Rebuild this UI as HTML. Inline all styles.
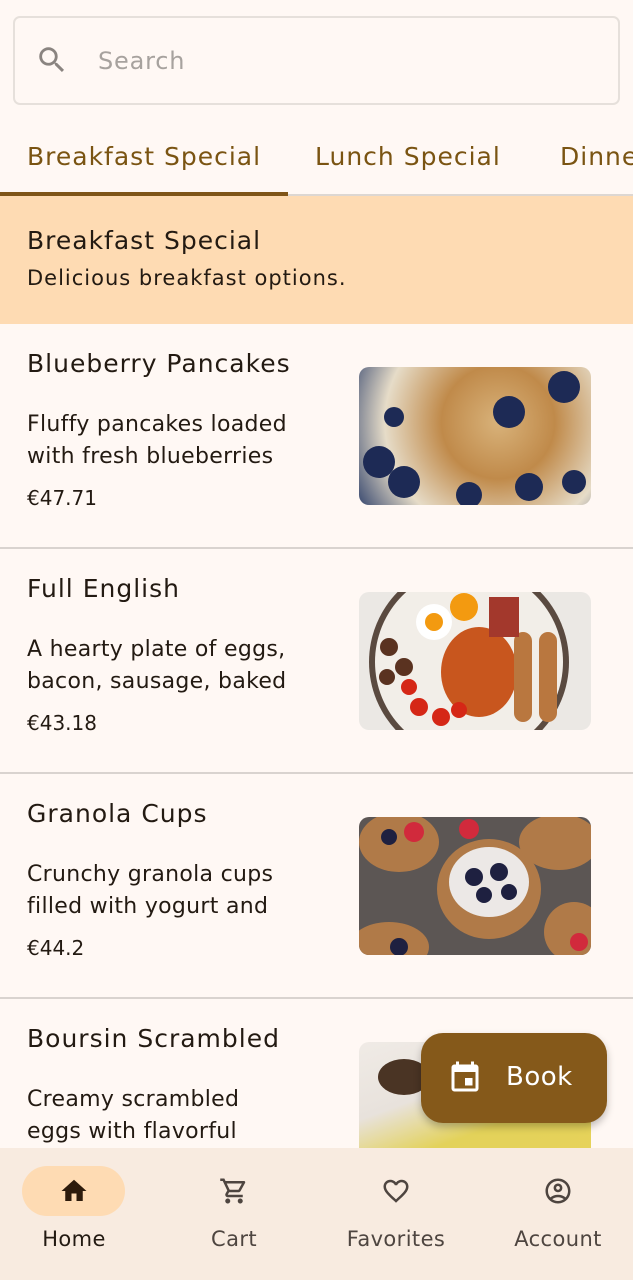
<!DOCTYPE html>
<html><head><meta charset="utf-8"><style>
*{margin:0;padding:0;box-sizing:border-box}
body{width:633px;height:1280px;overflow:hidden;background:#fff8f4;font-family:"DejaVu Sans","Liberation Sans",sans-serif;position:relative;color:#231a12}
.search{position:absolute;left:13px;top:16px;width:607px;height:89px;border:2px solid #e6e0db;border-radius:7px}
.search span{position:absolute;left:83px;top:29px;font-size:24px;letter-spacing:.8px;color:#a7a29e}
.search svg{position:absolute;left:20px;top:25px}
.tab{position:absolute;top:142px;font-size:25px;letter-spacing:1px;color:#7a5412}
.ind{position:absolute;left:0;top:192px;width:288px;height:4px;background:#7f5518}
.div0{position:absolute;left:0;top:194px;width:633px;height:2px;background:#ddd7d2}
.hdr{position:absolute;left:0;top:196px;width:633px;height:128px;background:#fedbb3}
.hdr h2{position:absolute;left:27px;top:30px;font-size:25px;letter-spacing:1px;font-weight:normal}
.hdr p{position:absolute;left:27px;top:70px;font-size:21px;letter-spacing:1px}
.item{position:absolute;left:0;width:633px;height:225px;border-bottom:2px solid #d9d3cf}
.item h3{position:absolute;left:27px;top:25px;font-size:25px;letter-spacing:1px;font-weight:normal}
.item p{position:absolute;left:27px;top:85px;width:290px;font-size:22px;letter-spacing:.3px;line-height:32px}
.item .pr{position:absolute;left:27px;top:162px;font-size:20px}
.img{position:absolute;left:359px;top:43px;width:232px;height:138px;border-radius:10px;overflow:hidden}
.nav{position:absolute;left:0;top:1148px;width:633px;height:132px;background:#f8ebe0}
.ni{position:absolute;top:0;width:158px;text-align:center}
.ni .lb{position:absolute;top:79px;width:100%;font-size:21px;letter-spacing:.4px;color:#4e4540}
.ni svg{position:absolute;top:28px;left:64px}
.pill{position:absolute;left:22px;top:18px;width:103px;height:50px;border-radius:25px;background:#fedbb3}
.fab{position:absolute;left:421px;top:1033px;width:186px;height:90px;border-radius:22px;background:#85591a;box-shadow:0 4px 8px rgba(0,0,0,.25);color:#fff;font-size:26px;letter-spacing:.5px}
</style></head><body>
<div class="search"><svg width="34" height="34" viewBox="0 0 24 24"><path fill="#8a8480" d="M15.5 14h-.79l-.28-.27A6.47 6.47 0 0016 9.5 6.5 6.5 0 109.5 16c1.61 0 3.09-.59 4.23-1.57l.27.28v.79l5 4.99L20.49 19l-4.99-5zm-6 0C7.01 14 5 11.99 5 9.5S7.01 5 9.5 5 14 7.01 14 9.5 11.99 14 9.5 14z"/></svg><span>Search</span></div>
<div class="tab" style="left:27px">Breakfast Special</div>
<div class="tab" style="left:315px">Lunch Special</div>
<div class="tab" style="left:560px">Dinner</div>
<div class="div0"></div><div class="ind"></div>
<div class="hdr"><h2>Breakfast Special</h2><p>Delicious breakfast options.</p></div>

<div class="item" style="top:324px"><h3>Blueberry Pancakes</h3><p>Fluffy pancakes loaded with fresh blueberries</p><div class="pr">€47.71</div>
<div class="img" style="background:radial-gradient(circle at 60% 40%,#d8b27a 0,#c08a4a 35%,#e6dcc8 70%,#3a4a70 100%)">
<svg width="232" height="138"><g fill="#1d2a55"><circle cx="150" cy="45" r="16"/><circle cx="205" cy="20" r="16"/><circle cx="20" cy="95" r="16"/><circle cx="45" cy="115" r="16"/><circle cx="110" cy="128" r="13"/><circle cx="170" cy="120" r="14"/><circle cx="215" cy="115" r="12"/><circle cx="35" cy="50" r="10"/></g></svg></div></div>

<div class="item" style="top:549px"><h3>Full English</h3><p>A hearty plate of eggs, bacon, sausage, baked</p><div class="pr">€43.18</div>
<div class="img" style="background:#ebe8e4"><svg width="232" height="138"><circle cx="110" cy="70" r="100" fill="#5a4a40"/><circle cx="110" cy="70" r="94" fill="#f2eee8"/><ellipse cx="120" cy="80" rx="38" ry="45" fill="#c8561e"/><circle cx="75" cy="30" r="18" fill="#fff"/><circle cx="75" cy="30" r="9" fill="#f39a10"/><circle cx="105" cy="15" r="14" fill="#f39a10"/><rect x="155" y="40" width="18" height="90" rx="9" fill="#b9773f"/><rect x="180" y="40" width="18" height="90" rx="9" fill="#b9773f"/><rect x="130" y="5" width="30" height="40" fill="#a3382c"/><g fill="#d52716"><circle cx="60" cy="115" r="9"/><circle cx="82" cy="125" r="9"/><circle cx="100" cy="118" r="8"/><circle cx="50" cy="95" r="8"/></g><g fill="#5a3220"><circle cx="30" cy="55" r="9"/><circle cx="45" cy="75" r="9"/><circle cx="28" cy="85" r="8"/></g></svg></div></div>

<div class="item" style="top:774px"><h3>Granola Cups</h3><p>Crunchy granola cups filled with yogurt and</p><div class="pr">€44.2</div>
<div class="img" style="background:#5c5654"><svg width="232" height="138"><g fill="#b07a48"><ellipse cx="130" cy="72" rx="52" ry="50"/><ellipse cx="40" cy="25" rx="40" ry="30"/><ellipse cx="200" cy="25" rx="40" ry="28"/><ellipse cx="30" cy="130" rx="40" ry="25"/><ellipse cx="215" cy="115" rx="30" ry="30"/></g><ellipse cx="130" cy="65" rx="40" ry="35" fill="#ece8e6"/><g fill="#1e2040"><circle cx="115" cy="60" r="9"/><circle cx="140" cy="55" r="9"/><circle cx="125" cy="78" r="8"/><circle cx="150" cy="75" r="8"/><circle cx="40" cy="130" r="9"/><circle cx="30" cy="20" r="8"/></g><g fill="#d12a3c"><circle cx="55" cy="15" r="10"/><circle cx="110" cy="12" r="10"/><circle cx="220" cy="125" r="9"/></g></svg></div></div>

<div class="item" style="top:999px;border:0"><h3>Boursin Scrambled</h3><p style="width:250px">Creamy scrambled eggs with flavorful</p>
<div class="img" style="background:linear-gradient(160deg,#f0ebe6 0,#e8e2dc 35%,#e3d25a 60%,#e8d35a 100%)"><svg width="232" height="138"><ellipse cx="45" cy="35" rx="26" ry="18" fill="#4a3424"/></svg></div></div>

<div class="fab"><svg style="position:absolute;left:26px;top:27px" width="36" height="36" viewBox="0 0 24 24"><path fill="#fff" d="M17 12h-5v5h5v-5zM16 1v2H8V1H6v2H5c-1.11 0-1.99.9-1.99 2L3 19a2 2 0 002 2h14c1.1 0 2-.9 2-2V5c0-1.1-.9-2-2-2h-1V1h-2zm3 18H5V8h14v11z"/></svg><span style="position:absolute;left:85px;top:29px">Book</span></div>

<div class="nav">
<div class="pill"></div>
<div class="ni" style="left:-5px"><svg width="30" height="30" viewBox="0 0 24 24"><path fill="#2d1b0c" d="M10 20v-6h4v6h5v-8h3L12 3 2 12h3v8z"/></svg><div class="lb" style="color:#231a12">Home</div></div>
<div class="ni" style="left:155px"><svg width="30" height="30" viewBox="0 0 24 24"><path fill="#4e4540" d="M15.55 13c.75 0 1.41-.41 1.75-1.03l3.58-6.49A1 1 0 0020.01 4H5.21l-.94-2H1v2h2l3.6 7.59-1.35 2.44C4.52 15.37 5.48 17 7 17h12v-2H7l1.1-2h7.45zM6.16 6h12.15l-2.76 5H8.53L6.16 6zM7 18c-1.1 0-1.99.9-1.99 2S5.9 22 7 22s2-.9 2-2-.9-2-2-2zm10 0c-1.1 0-1.99.9-1.99 2s.89 2 1.99 2 2-.9 2-2-.9-2-2-2z"/></svg><div class="lb">Cart</div></div>
<div class="ni" style="left:317px"><svg width="30" height="30" viewBox="0 0 24 24"><path fill="#4e4540" d="M16.5 3c-1.74 0-3.41.81-4.5 2.09C10.91 3.81 9.24 3 7.5 3 4.42 3 2 5.42 2 8.5c0 3.78 3.4 6.86 8.55 11.54L12 21.35l1.45-1.32C18.6 15.36 22 12.28 22 8.5 22 5.42 19.58 3 16.5 3zm-4.4 15.55l-.1.1-.1-.1C7.14 14.24 4 11.39 4 8.5 4 6.5 5.5 5 7.5 5c1.54 0 3.04.99 3.57 2.36h1.87C13.46 5.99 14.96 5 16.5 5c2 0 3.5 1.5 3.5 3.5 0 2.89-3.14 5.74-7.9 10.05z"/></svg><div class="lb">Favorites</div></div>
<div class="ni" style="left:479px"><svg width="30" height="30" viewBox="0 0 24 24"><path fill="#4e4540" d="M12 2C6.48 2 2 6.48 2 12s4.48 10 10 10 10-4.48 10-10S17.52 2 12 2zM7.35 18.5C8.66 17.56 10.26 17 12 17s3.34.56 4.65 1.5C15.34 19.44 13.74 20 12 20s-3.340-.56-4.65-1.5zm10.79-1.38a9.947 9.947 0 00-12.28 0A7.957 7.957 0 014 12c0-4.42 3.58-8 8-8s8 3.58 8 8c0 1.95-.7 3.73-1.86 5.12zM12 6c-1.93 0-3.5 1.57-3.5 3.5S10.07 13 12 13s3.5-1.57 3.5-3.5S13.93 6 12 6zm0 5c-.83 0-1.5-.67-1.5-1.5S11.17 8 12 8s1.5.67 1.5 1.5S12.83 11 12 11z"/></svg><div class="lb">Account</div></div>
</div>
</body></html>
